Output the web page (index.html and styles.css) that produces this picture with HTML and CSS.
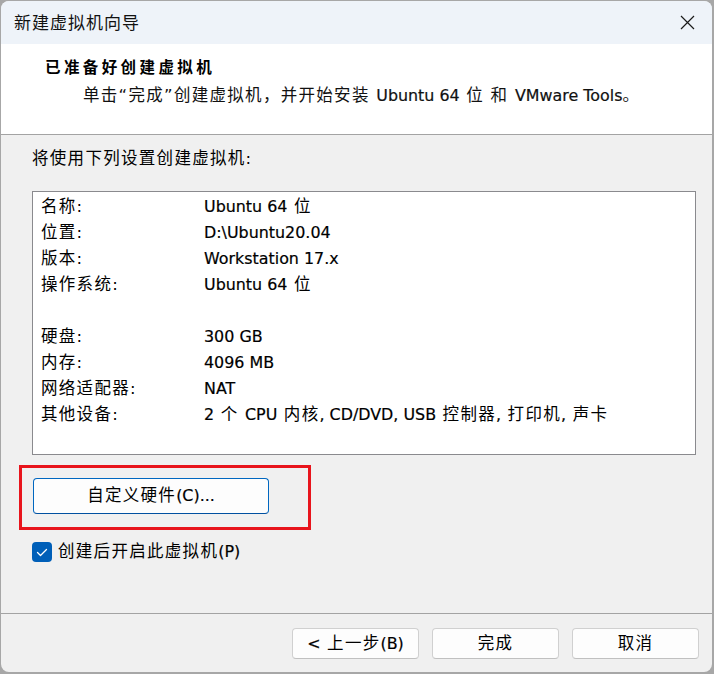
FILE: index.html
```html
<!DOCTYPE html>
<html lang="zh-CN">
<head>
<meta charset="utf-8">
<title>新建虚拟机向导</title>
<link rel="stylesheet" href="styles.css">
</head>
<body>
<div class="window">
  <div class="titlebar">
    <span class="title">新建虚拟机向导</span>
    <span class="close">
      <svg width="15" height="15" viewBox="0 0 15 15"><path d="M1 1 L14 14 M14 1 L1 14" stroke="#1b1b1b" stroke-width="1.2" fill="none"/></svg>
    </span>
  </div>
  <div class="header">
    <div class="h-title">已准备好创建虚拟机</div>
    <div class="h-sub">单击“完成”创建虚拟机，并开始安装 <span class="en">Ubuntu 64</span> 位 和 <span class="en">VMware Tools</span>。</div>
  </div>
  <div class="content">
    <div class="intro">将使用下列设置创建虚拟机:</div>
    <div class="list">
      <div class="lbl">名称:</div><div class="val"><span class="en">Ubuntu 64</span> 位</div>
      <div class="lbl">位置:</div><div class="val"><span class="en">D:\Ubuntu20.04</span></div>
      <div class="lbl">版本:</div><div class="val"><span class="en">Workstation 17.x</span></div>
      <div class="lbl">操作系统:</div><div class="val"><span class="en">Ubuntu 64</span> 位</div>
      <div class="lbl"></div><div class="val"></div>
      <div class="lbl">硬盘:</div><div class="val"><span class="en">300 GB</span></div>
      <div class="lbl">内存:</div><div class="val"><span class="en">4096 MB</span></div>
      <div class="lbl">网络适配器:</div><div class="val"><span class="en">NAT</span></div>
      <div class="lbl">其他设备:</div><div class="val"><span class="en">2</span> 个 <span class="en">CPU</span> 内核<span class="en">, CD/DVD, USB</span> 控制器<span class="en">,</span> 打印机<span class="en">,</span> 声卡</div>
    </div>
    <div class="hw-wrap">
      <button class="btn hw">自定义硬件<span class="en">(C)...</span></button>
      <div class="highlight"></div>
    </div>
    <label class="check">
      <span class="box">
        <svg width="20" height="20" viewBox="0 0 20 20"><polyline points="5.5,10.5 8.5,13.5 14.5,7.5" stroke="#fff" stroke-width="1.3" fill="none" stroke-linecap="round" stroke-linejoin="round"/></svg>
      </span>
      <span>创建后开启此虚拟机<span class="en">(P)</span></span>
    </label>
  </div>
  <div class="footer">
    <button class="btn fbtn"><span class="en">&lt;</span> 上一步<span class="en">(B)</span></button>
    <button class="btn fbtn">完成</button>
    <button class="btn fbtn">取消</button>
  </div>
</div>
</body>
</html>
```

FILE: styles.css
```css
html, body {
  margin: 0;
  padding: 0;
}
body {
  width: 714px;
  height: 674px;
  overflow: hidden;
  background: #a7a7a7;
}
.window {
  margin: 1px 2px 2px 1px;
  width: 711px;
  height: 671px;
  background: #f0f0f0;
  border-radius: 8px;
  overflow: hidden;
  display: flex;
  flex-direction: column;
  font-family: "DejaVu Sans", "Noto Sans CJK SC", sans-serif;
  font-size: 16.5px;
  letter-spacing: 1.3px;
  color: #000;
}
.en {
  font-size: 15.9px;
  letter-spacing: 0;
  -webkit-text-stroke: 0.2px currentColor;
}
.titlebar {
  height: 43px;
  flex: none;
  background: #eef3f9;
  display: flex;
  align-items: center;
  justify-content: space-between;
  padding-left: 13px;
}
.title {
  font-size: 17px;
  line-height: 24px;
  letter-spacing: 1px;
  color: #111;
}
.close {
  width: 50px;
  height: 43px;
  display: flex;
  align-items: center;
  justify-content: center;
}
.close svg {
  display: block;
}
.header {
  flex: none;
  height: 91px;
  box-sizing: border-box;
  background: #fff;
  border-bottom: 1px solid #a3a3a3;
  padding: 12px 0 0 44px;
}
.h-title {
  font-weight: bold;
  font-size: 15.5px;
  letter-spacing: 3.4px;
  line-height: 24px;
}
.h-sub {
  margin: 4px 0 0 38px;
  line-height: 24px;
  color: #111;
}
.content {
  flex: 1;
  padding: 11px 16px 0 31px;
}
.intro {
  line-height: 26px;
}
.list {
  margin-top: 19px;
  height: 264px;
  box-sizing: border-box;
  background: #fff;
  border: 1px solid #8a8a8e;
  padding: 2px 0 0 8px;
  display: grid;
  grid-template-columns: 163px 1fr;
  grid-auto-rows: 26px;
  align-content: start;
}
.lbl, .val {
  line-height: 26px;
  white-space: nowrap;
}
.hw-wrap {
  position: relative;
  margin-top: 23px;
  margin-left: 1px;
  width: 236px;
  height: 36px;
}
.btn {
  font-family: inherit;
  font-size: inherit;
  letter-spacing: inherit;
  color: #000;
  padding: 0;
  margin: 0;
  box-sizing: border-box;
  line-height: 24px;
}
.hw {
  width: 236px;
  height: 36px;
  background: #fdfdfd;
  border: 1px solid #0067c0;
  border-bottom-color: #0050a0;
  border-radius: 4px;
}
.highlight {
  position: absolute;
  left: -14px;
  top: -13px;
  width: 292px;
  height: 65px;
  box-sizing: border-box;
  border: 3px solid #e8141c;
  pointer-events: none;
}
.check {
  margin-top: 28px;
  display: flex;
  align-items: center;
  gap: 6px;
  line-height: 20px;
}
.box {
  width: 20px;
  height: 20px;
  border-radius: 4px;
  background: #005fb8;
  display: block;
}
.box svg {
  display: block;
}
.footer {
  flex: none;
  height: 59px;
  box-sizing: border-box;
  border-top: 1px solid #a3a3a3;
  padding: 14px 13px 0 0;
  display: flex;
  justify-content: flex-end;
  align-items: flex-start;
  gap: 13px;
}
.fbtn {
  width: 127px;
  height: 31px;
  background: #fdfdfd;
  border: 1px solid #d0d0d0;
  border-bottom-color: #c0c0c0;
  border-radius: 4px;
}
```
